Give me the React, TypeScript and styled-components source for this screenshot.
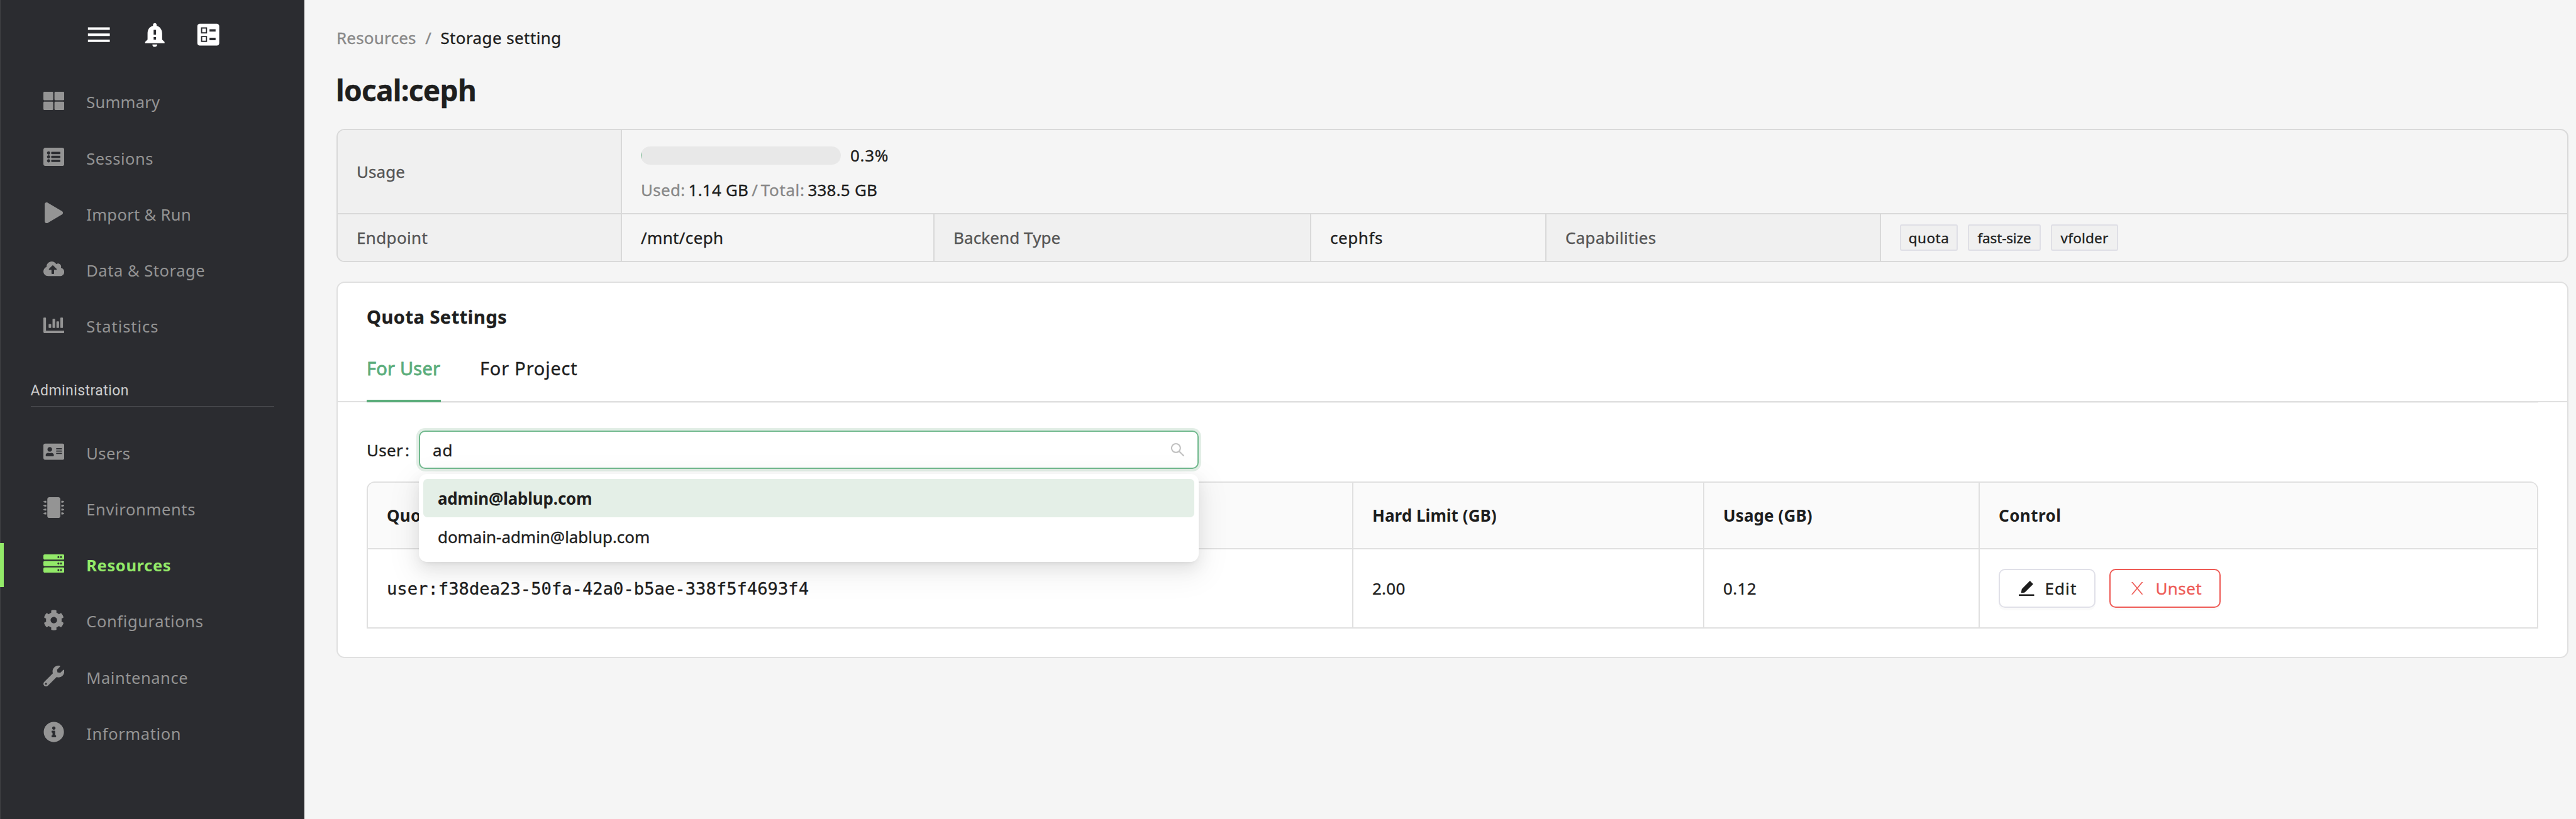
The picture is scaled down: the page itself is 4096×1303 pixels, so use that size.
import React from "react";
import styled, { createGlobalStyle, css } from "styled-components";
import {
  FaThLarge,
  FaListAlt,
  FaPlay,
  FaCloudUploadAlt,
  FaChartBar,
  FaAddressCard,
  FaMicrochip,
  FaServer,
  FaCog,
  FaWrench,
  FaInfoCircle,
} from "react-icons/fa";
import { MdMenu, MdNotificationImportant, MdBallot } from "react-icons/md";
import { AiOutlineSearch } from "react-icons/ai";

const color = {
  page: "#f5f5f5",
  sidebar: "#2b2c30",
  text: "#1e1e1e",
  label: "#555555",
  muted: "#888888",
  line: "#e0e0e0",
  descLine: "#d9d9d9",
  green: "#5bad7b",
  active: "#93ea69",
  danger: "#ee5b56",
};

const GlobalStyle = createGlobalStyle`
  * { box-sizing: border-box; }
  body {
    margin: 0;
    background: ${color.page};
    color: ${color.text};
    font-family: "Noto Sans", "Open Sans", sans-serif;
    font-size: 26px;
    overflow: hidden;
  }
`;

const Layout = styled.div`
  display: flex;
  width: 4096px;
  height: 1303px;
  background: ${color.page};
`;

/* Tracked text run */
const Text = styled.span<{ $ls?: number; $muted?: boolean }>`
  letter-spacing: ${(p) => p.$ls ?? 0}px;
  white-space: nowrap;
  ${(p) => p.$muted && css`color: ${color.muted};`}
`;

/* ---------- Sidebar ---------- */

const Sidebar = styled.aside`
  flex: none;
  width: 484.4px;
  height: 100%;
  background: ${color.sidebar};
  box-shadow: inset 1px 0 0 #404144;
`;

const SidebarTools = styled.div`
  display: flex;
  height: 117.8px;
  padding: 31.8px 0 0 133.8px;
  color: #ffffff;
  svg {
    width: 46.4px;
    height: 46.4px;
  }
  svg + svg {
    margin-left: 42.6px;
  }
  svg + svg + svg {
    margin-left: 38.9px;
  }
`;

const NavItem = styled.div<{ $active?: boolean }>`
  display: flex;
  align-items: center;
  height: 89.25px;
  font-size: 25.5px;
  color: ${(p) => (p.$active ? color.active : "#949494")};
  font-weight: ${(p) => (p.$active ? 700 : 400)};
`;

const NavMarker = styled.div<{ $active?: boolean }>`
  width: 6px;
  height: 70px;
  margin-right: 49.3px;
  background: ${(p) => (p.$active ? color.active : "transparent")};
`;

const NavIcon = styled.div`
  display: flex;
  justify-content: center;
  width: 60px;
  margin: 0 21.9px 4.6px 0;
  svg {
    width: auto;
    height: 33.2px;
  }
`;

const NavSection = styled.div`
  margin: 41.7px 48.5px 29.3px;
  padding-bottom: 8px;
  border-bottom: 1px solid #4b4c50;
  font-family: Roboto, sans-serif;
  font-size: 23px;
  line-height: 32px;
  letter-spacing: 0.45px;
  color: #cdcdcd;
`;

/* ---------- Page ---------- */

const Main = styled.main`
  flex: 1;
  min-width: 0;
  padding: 40px 12px 0 50.6px;
  -webkit-text-stroke: 0.35px currentColor;
`;

const Breadcrumb = styled.nav`
  display: flex;
  gap: 14.5px;
  line-height: 40px;
`;

const Title = styled.h1`
  margin: 31px 0 30px -1px;
  font-size: 46px;
  line-height: 64px;
  font-weight: 700;
  letter-spacing: -0.75px;
`;

const Descriptions = styled.section`
  border: 2px solid ${color.descLine};
  border-radius: 13px;
  overflow: hidden;
`;

const DescRow = styled.div<{ $h: number }>`
  display: flex;
  height: ${(p) => p.$h}px;
  & + & {
    box-sizing: content-box;
    border-top: 2px solid ${color.descLine};
  }
`;

const DescCell = styled.div<{ $w?: number; $label?: boolean }>`
  display: flex;
  align-items: center;
  padding-left: 30px;
  ${(p) =>
    p.$w
      ? css`
          flex: none;
          width: ${p.$w}px;
          border-right: 2px solid ${color.descLine};
        `
      : css`
          flex: 1;
        `}
  ${(p) =>
    p.$label &&
    css`
      background: #f0f0f0;
      color: ${color.label};
    `}
`;

const UsageCell = styled(DescCell)`
  flex-direction: column;
  align-items: flex-start;
  gap: 14.7px;
  padding-top: 20px;
  line-height: 40px;
`;

const UsageLine = styled.div<{ $gap: number }>`
  display: flex;
  align-items: center;
  gap: ${(p) => p.$gap}px;
`;

const Progress = styled.div`
  width: 318px;
  height: 29px;
  border-radius: 15px;
  background: #e8e8e8;
  overflow: hidden;
`;

const ProgressFill = styled.div`
  height: 100%;
  background: ${color.green};
`;

const Tag = styled.span<{ $w: number }>`
  display: inline-flex;
  align-items: center;
  justify-content: center;
  width: ${(p) => p.$w}px;
  height: 42px;
  margin-right: 16px;
  border: 2px solid #dfdfe6;
  border-radius: 3px;
  background: #f0f0f0;
  font-size: 22.5px;
`;

const Card = styled.section`
  margin-top: 31px;
  border: 2px solid ${color.line};
  border-radius: 13px;
  background: #ffffff;
`;

const CardHead = styled.header`
  height: 190px;
  padding: 32px 46px 0;
  border-bottom: 2px solid ${color.line};
`;

const CardTitle = styled.div`
  font-size: 29px;
  line-height: 44px;
  font-weight: 700;
`;

const Tabs = styled.div`
  display: flex;
  gap: 62px;
  height: 114px;
  box-shadow: 0 1px 0 rgba(224, 224, 224, 0.5);
`;

const Tab = styled.div<{ $active?: boolean }>`
  height: 114px;
  padding-top: 37.6px;
  font-size: 29px;
  line-height: 44px;
  ${(p) =>
    p.$active &&
    css`
      width: 118px;
      color: ${color.green};
      border-bottom: 4px solid ${color.green};
      -webkit-text-stroke: 0.8px ${color.green};
    `}
`;

const CardBody = styled.div`
  padding: 45px 46px 45px;
`;

const Filter = styled.div`
  display: flex;
  align-items: center;
  height: 61px;
`;

const FilterLabel = styled.label`
  width: 83px;
`;

const Colon = styled.span`
  margin-left: 3px;
`;

const Select = styled.div`
  position: relative;
  width: 1240px;
`;

const SelectInput = styled.div`
  display: flex;
  align-items: center;
  justify-content: space-between;
  height: 61px;
  padding: 0 17.5px 0 20px;
  border: 2px solid #71b98e;
  border-radius: 10px;
  box-shadow: 0 0 0 4px #e2eee6;
  background: #ffffff;
  svg {
    width: 27px;
    height: 27px;
    color: #bfbfbf;
  }
`;

const Dropdown = styled.div`
  position: absolute;
  z-index: 2;
  top: 69px;
  left: 0;
  width: 1240px;
  height: 140px;
  padding: 8px 7px;
  border-radius: 13px;
  background: #ffffff;
  box-shadow:
    0 9.7px 25.8px 0 rgba(0, 0, 0, 0.08),
    0 4.8px 9.7px -6.5px rgba(0, 0, 0, 0.12),
    0 14.5px 45px 13px rgba(0, 0, 0, 0.05);
`;

const Option = styled.div<{ $selected?: boolean }>`
  height: 61px;
  padding-left: 23px;
  line-height: 62px;
  border-radius: 6.5px;
  ${(p) =>
    p.$selected &&
    css`
      background: #e4efe7;
      font-weight: 700;
      -webkit-text-stroke: 0;
    `}
`;

const Table = styled.div`
  margin-top: 20px;
  border: 2px solid ${color.line};
  border-radius: 13px 13px 0 0;
  overflow: hidden;
`;

const TableRow = styled.div<{ $head?: boolean }>`
  display: grid;
  grid-template-columns: 1567px 558px 438px 1fr;
  height: ${(p) => (p.$head ? 106 : 124)}px;
  ${(p) =>
    p.$head &&
    css`
      background: #fafafa;
      border-bottom: 2px solid ${color.line};
      font-weight: 700;
      -webkit-text-stroke: 0;
    `}
`;

const TableCell = styled.div`
  display: flex;
  align-items: center;
  padding-left: 30px;
  border-right: 2px solid ${color.line};
  &:last-child {
    border-right: 0;
  }
`;

const ScopeId = styled.span`
  font-family: "DejaVu Sans Mono", monospace;
  font-size: 27.2px;
`;

const Button = styled.button<{ $w: number; $danger?: boolean }>`
  display: flex;
  align-items: center;
  gap: ${(p) => (p.$danger ? 19.6 : 16.6)}px;
  width: ${(p) => p.$w}px;
  height: 62px;
  margin: 0 22.4px 0 0;
  padding: 0 0 0 ${(p) => (p.$danger ? 32.9 : 30.4)}px;
  border: 2px solid ${(p) => (p.$danger ? color.danger : "#e0e0e8")};
  border-radius: 10px;
  background: #ffffff;
  box-shadow: 0 4px 0 rgba(0, 0, 0, 0.02);
  color: ${(p) => (p.$danger ? color.danger : color.text)};
  font: inherit;
`;

const PencilIcon = () => (
  <svg width="24.5" height="24" viewBox="0 0 91 89" fill="currentColor">
    <path d="M66 0 85 19 38.500 66Q35.500 69 32 69.500L17 72Q13.500 72 14 69L17 52Q17.500 48.500 20 46Z" />
    <rect y="80" width="91" height="9" rx="2" />
  </svg>
);

const CrossIcon = () => (
  <svg width="18.6" height="19.7" viewBox="0 0 69 73" fill="currentColor">
    <path d="M0 0h8L69 73h-8z" />
    <path d="M69 0h-8L0 73h8z" />
  </svg>
);

type Nav = { icon: React.ReactNode; label: string; ls: number; active?: boolean };

const mainNav: Nav[] = [
  { icon: <FaThLarge />, label: "Summary", ls: 0.27 },
  { icon: <FaListAlt />, label: "Sessions", ls: 0.49 },
  { icon: <FaPlay />, label: "Import & Run", ls: 0.35 },
  { icon: <FaCloudUploadAlt />, label: "Data & Storage", ls: 0.54 },
  { icon: <FaChartBar />, label: "Statistics", ls: 0.94 },
];

const adminNav: Nav[] = [
  { icon: <FaAddressCard />, label: "Users", ls: 0.45 },
  { icon: <FaMicrochip />, label: "Environments", ls: 0.65 },
  { icon: <FaServer />, label: "Resources", ls: 0.63, active: true },
  { icon: <FaCog />, label: "Configurations", ls: 0.62 },
  { icon: <FaWrench />, label: "Maintenance", ls: 0.56 },
  { icon: <FaInfoCircle />, label: "Information", ls: 0.6 },
];

const NavList = ({ items }: { items: Nav[] }) => (
  <>
    {items.map((n) => (
      <NavItem key={n.label} $active={n.active}>
        <NavMarker $active={n.active} />
        <NavIcon>{n.icon}</NavIcon>
        <Text $ls={n.ls}>{n.label}</Text>
      </NavItem>
    ))}
  </>
);

const usedPercent = 0.3;

export default function App() {
  return (
    <Layout>
      <GlobalStyle />
      <Sidebar>
        <SidebarTools>
          <MdMenu />
          <MdNotificationImportant />
          <MdBallot />
        </SidebarTools>
        <NavList items={mainNav} />
        <NavSection>Administration</NavSection>
        <NavList items={adminNav} />
      </Sidebar>

      <Main>
        <Breadcrumb>
          <Text $muted $ls={0.2}>Resources</Text>
          <Text $muted>/</Text>
          <Text $ls={0.4}>Storage setting</Text>
        </Breadcrumb>
        <Title>local:ceph</Title>

        <Descriptions>
          <DescRow $h={132}>
            <DescCell $label $w={452}><Text $ls={0.05}>Usage</Text></DescCell>
            <UsageCell>
              <UsageLine $gap={15}>
                <Progress>
                  <ProgressFill style={{ width: `${usedPercent}%` }} />
                </Progress>
                <Text $ls={0.7}>{usedPercent}%</Text>
              </UsageLine>
              <UsageLine $gap={5}>
                <Text $muted $ls={0.3}>Used:</Text>
                <Text $ls={0.2}>1.14 GB</Text>
                <Text $muted>/</Text>
                <Text $muted $ls={0.6}>Total:</Text>
                <Text $ls={0.2}>338.5 GB</Text>
              </UsageLine>
            </UsageCell>
          </DescRow>
          <DescRow $h={74}>
            <DescCell $label $w={452}><Text $ls={0.35}>Endpoint</Text></DescCell>
            <DescCell $w={497}><Text $ls={0.35}>/mnt/ceph</Text></DescCell>
            <DescCell $label $w={599}><Text $ls={0.1}>Backend Type</Text></DescCell>
            <DescCell $w={374}><Text $ls={0.55}>cephfs</Text></DescCell>
            <DescCell $label $w={532}><Text $ls={0.3}>Capabilities</Text></DescCell>
            <DescCell>
              <Tag $w={92}><Text $ls={0.5}>quota</Text></Tag>
              <Tag $w={116}><Text $ls={-0.15}>fast-size</Text></Tag>
              <Tag $w={107}><Text $ls={0.2}>vfolder</Text></Tag>
            </DescCell>
          </DescRow>
        </Descriptions>

        <Card>
          <CardHead>
            <CardTitle><Text $ls={0.5}>Quota Settings</Text></CardTitle>
            <Tabs>
              <Tab $active><Text $ls={0.2}>For User</Text></Tab>
              <Tab><Text $ls={0.8}>For Project</Text></Tab>
            </Tabs>
          </CardHead>
          <CardBody>
            <Filter>
              <FilterLabel>
                <Text $ls={0.3}>User</Text>
                <Colon>:</Colon>
              </FilterLabel>
              <Select>
                <SelectInput>
                  <Text $ls={1}>ad</Text>
                  <AiOutlineSearch />
                </SelectInput>
                <Dropdown>
                  <Option $selected><Text $ls={-0.2}>admin@lablup.com</Text></Option>
                  <Option><Text $ls={-0.05}>domain-admin@lablup.com</Text></Option>
                </Dropdown>
              </Select>
            </Filter>

            <Table>
              <TableRow $head>
                <TableCell><Text $ls={0.3}>Quota Scope ID</Text></TableCell>
                <TableCell><Text $ls={0.05}>Hard Limit (GB)</Text></TableCell>
                <TableCell><Text $ls={0.1}>Usage (GB)</Text></TableCell>
                <TableCell><Text $ls={0.45}>Control</Text></TableCell>
              </TableRow>
              <TableRow>
                <TableCell><ScopeId>user:f38dea23-50fa-42a0-b5ae-338f5f4693f4</ScopeId></TableCell>
                <TableCell><Text $ls={0.25}>2.00</Text></TableCell>
                <TableCell><Text $ls={0.35}>0.12</Text></TableCell>
                <TableCell>
                  <Button $w={154}>
                    <PencilIcon />
                    <Text $ls={1.1}>Edit</Text>
                  </Button>
                  <Button $w={177} $danger>
                    <CrossIcon />
                    <Text $ls={0.4}>Unset</Text>
                  </Button>
                </TableCell>
              </TableRow>
            </Table>
          </CardBody>
        </Card>
      </Main>
    </Layout>
  );
}
